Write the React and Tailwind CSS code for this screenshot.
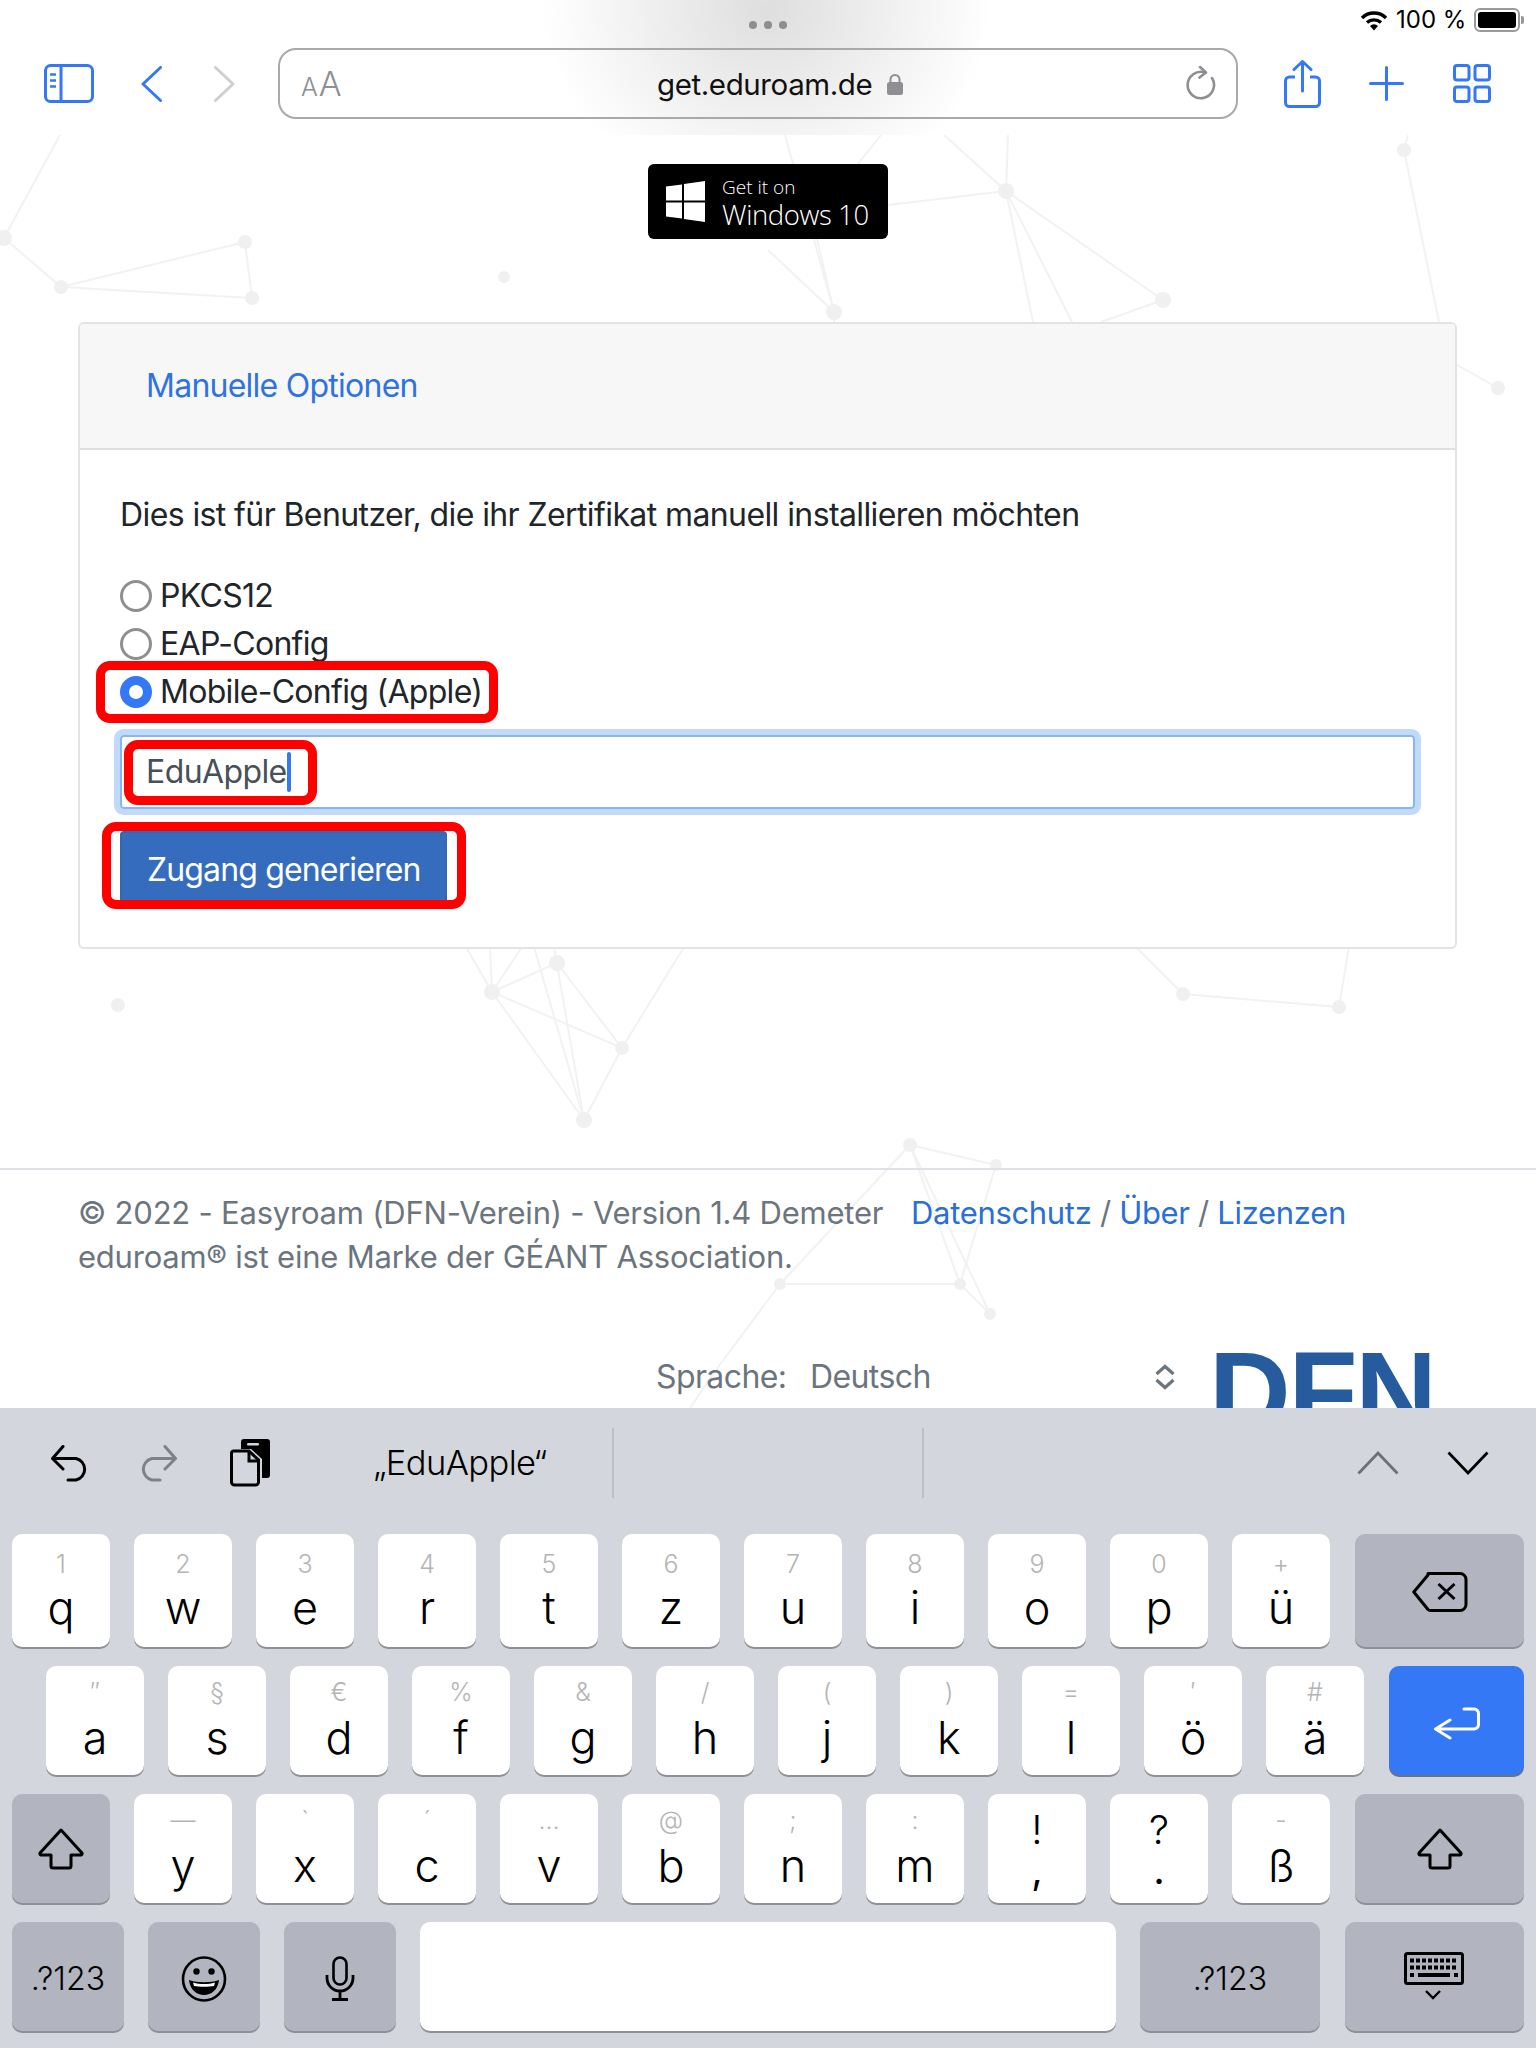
import React from "react";

const F = { fontFamily: '"Inter","Noto Sans",sans-serif' };
const nodes = [[4,238,9],[61,287,8],[245,242,8],[252,298,8],[504,277,7],[834,312,9],[1006,191,9],[1163,300,9],[1404,150,8],[1498,388,8],[118,1005,8],[492,992,9],[557,963,9],[622,1048,8],[584,1120,9],[1183,994,8],[1339,1007,8],[910,1145,8],[996,1165,7],[960,1284,7],[990,1314,7],[780,1284,7]];
const lines = [[60,135,4,238],[4,238,61,287],[61,287,245,242],[245,242,252,298],[61,287,252,298],[785,135,834,312],[817,239,834,312],[768,250,834,312],[834,312,834,322],[881,135,858,164],[888,205,1006,191],[1006,191,1163,300],[1006,191,1033,322],[1006,191,1072,322],[1006,191,1008,135],[944,135,1006,191],[1163,300,1101,322],[1404,150,1439,322],[1408,135,1404,150],[1498,388,1457,365],[466,947,492,992],[490,947,492,992],[522,947,492,992],[492,992,557,963],[492,992,622,1048],[492,992,584,1120],[557,963,622,1048],[622,1048,584,1120],[534,947,584,1120],[554,947,584,1120],[684,947,622,1048],[1183,994,1339,1007],[1183,994,1136,947],[1339,1007,1349,947],[910,1145,960,1284],[910,1145,990,1314],[960,1284,990,1314],[780,1284,960,1284],[780,1284,716,1370],[716,1370,690,1408],[910,1145,996,1165],[780,1284,910,1145],[960,1284,996,1165]];

function Network() {
  return (
    <svg className="absolute left-0 top-[-135px]" width="1536" height="2048" viewBox="0 0 1536 2048">
      {lines.map((l, i) => <line key={i} x1={l[0]} y1={l[1]} x2={l[2]} y2={l[3]} stroke="#f2f2f2" strokeWidth="2" />)}
      {nodes.map((n, i) => <circle key={i} cx={n[0]} cy={n[1]} r={n[2] - 1} fill="#f0f0f0" />)}
    </svg>
  );
}

const blue = "#3478f6";

function StatusRight() {
  return (
    <div className="flex justify-end pr-[12px] pt-[8px] h-[48px] items-center pb-[16px]">
      <svg width="28" height="21" viewBox="0 0 28 21" className="mt-[1px]">
        <path d="M2 8 A17 17 0 0 1 26 8" fill="none" stroke="#000" strokeWidth="3.4" />
        <path d="M7 12.5 A10.5 10.5 0 0 1 21 12.5" fill="none" stroke="#000" strokeWidth="3.4" />
        <path d="M10 16 L14 20.5 L18 16 A5.5 5.5 0 0 0 10 16 Z" fill="#000" />
      </svg>
      <span className="ml-[8px] text-[24px] leading-[24px] text-black w-[78px]">100 %</span>
      <div className="w-[46px] h-[24px] rounded-[6px] border-2 border-[#9a9a9a] p-[2px]">
        <div className="w-full h-full rounded-[3px] bg-black" />
      </div>
      <div className="w-[3px] h-[8px] rounded-r-[2px] bg-[#9a9a9a] ml-[1px]" />
    </div>
  );
}

function Toolbar() {
  return (
    <div className="h-[135px] shrink-0 bg-[radial-gradient(ellipse_225px_190px_at_768px_10px,#dedede,#f2f2f2_60%,#ffffff)]" >
      <div className="grid grid-cols-[1fr_auto_1fr] h-[48px]">
        <div />
        <div className="flex gap-[7px] pt-[21px]">
          <div className="w-[8px] h-[8px] rounded-full bg-[#8e8e8e]" />
          <div className="w-[8px] h-[8px] rounded-full bg-[#8e8e8e]" />
          <div className="w-[8px] h-[8px] rounded-full bg-[#8e8e8e]" />
        </div>
        <StatusRight />
      </div>
      <div className="flex items-center pl-[44px] h-[71px]">
        <svg width="50" height="39" viewBox="0 0 50 39">
          <rect x="1.5" y="1.5" width="47" height="36" rx="5" fill="none" stroke={blue} strokeWidth="3" />
          <path d="M17 1.5V37.5" stroke={blue} strokeWidth="3" />
          <path d="M6 10.5H12M6 16.5H12M6 22.5H12" stroke={blue} strokeWidth="2.4" />
        </svg>
        <svg width="21" height="36" viewBox="0 0 21 36" className="ml-[47px]">
          <path d="M19.5 1.5L2 18L19.5 34.5" fill="none" stroke={blue} strokeWidth="3" strokeLinecap="round" strokeLinejoin="round" />
        </svg>
        <svg width="21" height="36" viewBox="0 0 21 36" className="ml-[52px]">
          <path d="M1.5 1.5L19 18L1.5 34.5" fill="none" stroke="#cfcfcf" strokeWidth="3" strokeLinecap="round" strokeLinejoin="round" />
        </svg>
        <div className="ml-[43px] w-[960px] h-[71px] rounded-[18px] border-2 border-[#a9a9a9] flex items-center pl-[21px]">
          <span className="text-[#8e8e93] w-[38px] flex items-baseline mt-[4px]">
            <span className="text-[25px] leading-[26px] font-light">A</span>
            <span className="ml-[1px] text-[34px] leading-[26px] font-light">A</span>
          </span>
          <span className="ml-[318px] text-[29.5px] leading-[36px] text-[#111] tracking-[-0.4px] whitespace-nowrap">get.eduroam.de</span>
          <svg width="16" height="22" viewBox="0 0 16 22" className="ml-[15px]">
            <path d="M3.5 10V6.5a4.5 4.5 0 0 1 9 0V10" fill="none" stroke="#8e8e93" strokeWidth="2" />
            <rect x="0" y="9" width="16" height="13" rx="2.5" fill="#8e8e93" />
          </svg>
          <svg width="30" height="36" viewBox="0 0 30 36" className="ml-auto mr-[20px]">
            <path d="M19 6.5A13.2 13.2 0 1 0 26 12" fill="none" stroke="#8e8e93" strokeWidth="2.6" strokeLinecap="round" />
            <path d="M14 1L20 6.5L13.5 11.5" fill="none" stroke="#8e8e93" strokeWidth="2.6" strokeLinecap="round" strokeLinejoin="round" />
          </svg>
        </div>
        <svg width="37" height="48" viewBox="0 0 37 48" className="ml-[46px]">
          <path d="M11 17H5.5a4 4 0 0 0-4 4V42.5a4 4 0 0 0 4 4h26a4 4 0 0 0 4-4V21a4 4 0 0 0-4-4H26" fill="none" stroke={blue} strokeWidth="3" />
          <path d="M18.5 31V2M10 9.5L18.5 1.5L27 9.5" fill="none" stroke={blue} strokeWidth="3" strokeLinecap="round" strokeLinejoin="round" />
        </svg>
        <svg width="35" height="35" viewBox="0 0 35 35" className="ml-[48px]">
          <path d="M17.5 1.5V33.5M1.5 17.5H33.5" stroke={blue} strokeWidth="3" strokeLinecap="round" />
        </svg>
        <svg width="38" height="39" viewBox="0 0 38 39" className="ml-[49px]">
          <rect x="1.5" y="1.5" width="14.5" height="14.5" rx="2.5" fill="none" stroke={blue} strokeWidth="3" />
          <rect x="22" y="1.5" width="14.5" height="14.5" rx="2.5" fill="none" stroke={blue} strokeWidth="3" />
          <rect x="1.5" y="23" width="14.5" height="14.5" rx="2.5" fill="none" stroke={blue} strokeWidth="3" />
          <rect x="22" y="23" width="14.5" height="14.5" rx="2.5" fill="none" stroke={blue} strokeWidth="3" />
        </svg>
      </div>
    </div>
  );
}

function Radio({ checked, label }) {
  return (
    <div className="flex items-center h-[48px]">
      {checked ? (
        <div className="w-[32px] h-[32px] rounded-full border-[9px] border-[#3478f6] bg-white" />
      ) : (
        <div className="w-[32px] h-[32px] rounded-full border-[3px] border-[#8f8f8f] bg-white" />
      )}
      <span className="ml-[8px] text-[32px] leading-[48px] text-[#212529] tracking-[-0.7px]">{label}</span>
    </div>
  );
}

function Card() {
  return (
    <div className="relative mt-[83px] mx-[78px] w-[1379px] rounded-[6px] border-2 border-[#e3e3e3] bg-white">
      <div className="h-[126px] bg-[#f7f7f7] border-b-2 border-[#e0e0e0] rounded-t-[4px] flex items-center pl-[66px]">
        <span className="text-[32px] text-[#2f72e0] tracking-[-0.75px]">Manuelle Optionen</span>
      </div>
      <div className="px-[40px] pt-[41px] pb-[38px]">
        <p className="text-[32px] leading-[48px] text-[#212529] tracking-[-0.6px] whitespace-nowrap">Dies ist für Benutzer, die ihr Zertifikat manuell installieren möchten</p>
        <div className="mt-[33px]">
          <Radio label="PKCS12" />
          <Radio label="EAP-Config" />
          <Radio checked label="Mobile-Config (Apple)" />
        </div>
        <div className="mt-[19px] h-[74px] rounded-[4px] border-2 border-[#8ab4f8] shadow-[0_0_0_6px_#c2daf9] flex items-center pl-[24px] relative">
          <span className="text-[32px] text-[#495057] tracking-[-0.6px]">EduApple</span>
          <span className="w-[4px] h-[40px] rounded-[2px] bg-[#3478f6]" />
        </div>
        <div className="mt-[22px] w-[327px] h-[78px] rounded-[4px] bg-[#366cbd] border-2 border-[#3566b0] flex items-center pl-[25px]">
          <span className="text-[32px] text-white tracking-[-0.85px] whitespace-nowrap">Zugang generieren</span>
        </div>
      </div>
      <div className="absolute left-[16px] top-[337px] w-[402px] h-[62px] rounded-[14px] border-[9px] border-[#ff0000]" />
      <div className="absolute left-[44px] top-[416px] w-[193px] h-[65px] rounded-[14px] border-[9px] border-[#ff0000]" />
      <div className="absolute left-[22px] top-[498px] w-[364px] h-[87px] rounded-[14px] border-[9px] border-[#ff0000]" />
    </div>
  );
}

function Footer() {
  return (
    <div className="mt-[219px] border-t-2 border-[#dee2e6] relative">
      <div className="pl-[78px] pt-[21px] text-[31px] leading-[44px] text-[#6c757d] tracking-[-0.22px]">
        <div className="flex whitespace-nowrap">
          <span className="w-[833px]">© 2022 - Easyroam (DFN-Verein) - Version 1.4 Demeter</span>
          <span className="tracking-[-0.32px]"><span className="text-[#2a6fd6]">Datenschutz</span> / <span className="text-[#2a6fd6]">Über</span> / <span className="text-[#2a6fd6]">Lizenzen</span></span>
        </div>
        <div>eduroam® ist eine Marke der GÉANT Association.</div>
      </div>
      <div className="flex items-start mt-[74px] pl-[656px] h-[120px]">
        <span className="text-[32px] leading-[48px] text-[#6c757d] tracking-[-0.6px] w-[154px]">Sprache:</span>
        <span className="text-[32px] leading-[48px] text-[#6c757d] tracking-[-0.6px] w-[344px]">Deutsch</span>
        <svg width="22" height="26" viewBox="0 0 22 26" className="mt-[11px]">
          <path d="M2.5 10L11 2.5L19.5 10M2.5 16L11 23.5L19.5 16" fill="none" stroke="#6c757d" strokeWidth="3.2" />
        </svg>
        <span className="ml-[33px] -mt-[17px] text-[113px] leading-[113px] font-bold text-[#265c9e] tracking-[-2.2px]" style={{ fontFamily: '"Liberation Sans",sans-serif' }}>DFN</span>
      </div>
    </div>
  );
}

function Key({ sub, ch, big, first }) {
  return (
    <div className={`w-[98px] ${first ? "h-[113px]" : "h-[109px]"} rounded-[10px] bg-white shadow-[0_2px_0_#8f9095] flex flex-col items-center text-black`}>
      {big ? (
        <>
          <span className="mt-[14px] text-[40px] leading-[44px] font-light">{sub}</span>
          <span className="text-[40px] leading-[36px]">{ch}</span>
        </>
      ) : (
        <>
          <span className={`${first ? "mt-[14px]" : "mt-[10px]"} h-[32px] text-[25px] leading-[32px] font-light text-[#b4b4b4]`}>{sub}</span>
          <span className={`${first ? "" : "mt-[2px]"} text-[45px] leading-[56px] font-light`}>{ch}</span>
        </>
      )}
    </div>
  );
}

function Dark({ w, children }) {
  return <div className={`${w} h-[109px] rounded-[10px] bg-[#b2b5bf] shadow-[0_2px_0_#8f9095] flex items-center justify-center text-black`}>{children}</div>;
}

const Shift = () => (
  <svg width="46" height="42" viewBox="0 0 46 42">
    <path d="M23 2L44 25a1.5 1.5 0 0 1-1 2H33V38a2 2 0 0 1-2 2H15a2 2 0 0 1-2-2V27H3a1.5 1.5 0 0 1-1-2Z" fill="none" stroke="#000" strokeWidth="3" strokeLinejoin="round" />
  </svg>
);

function Keyboard() {
  const r1 = [["1","q"],["2","w"],["3","e"],["4","r"],["5","t"],["6","z"],["7","u"],["8","i"],["9","o"],["0","p"],["+","ü"]];
  const r2 = [["″","a"],["§","s"],["€","d"],["%","f"],["&","g"],["/","h"],["(","j"],[")","k"],["=","l"],["′","ö"],["#","ä"]];
  const r3 = [["—","y"],["`","x"],["´","c"],["…","v"],["@","b"],[";","n"],[":","m"]];
  return (
    <div className="h-[640px] shrink-0 bg-[#d3d6dc]">
      <div className="h-[126px] flex items-start">
        <svg width="40" height="37" viewBox="0 0 40 37" className="ml-[50px] mt-[37px]">
          <path d="M13 1.5L2.5 13.5L13 24M2.5 13.5H26a11 11 0 0 1 0 21.5H18" fill="none" stroke="#000" strokeWidth="3" strokeLinecap="round" strokeLinejoin="round" />
        </svg>
        <svg width="40" height="37" viewBox="0 0 40 37" className="ml-[48px] mt-[37px]">
          <path d="M27 1.5L37.5 13.5L27 24M37.5 13.5H14a11 11 0 0 0 0 21.5H22" fill="none" stroke="#7f8186" strokeWidth="3" strokeLinecap="round" strokeLinejoin="round" />
        </svg>
        <svg width="40" height="48" viewBox="0 0 40 48" className="ml-[52px] mt-[31px]">
          <path d="M11 3a3 3 0 0 1 3-3H37a3 3 0 0 1 3 3V36a3 3 0 0 1-3 3H32V20L21 10H11Z" fill="#000" />
          <rect x="17" y="4" width="12" height="2.6" rx="1.3" fill="#d3d6dc" />
          <path d="M3.5 12H19L28.5 21V43a3 3 0 0 1-3 3H4.5a3 3 0 0 1-3-3V14a2 2 0 0 1 2-2Z" fill="#d3d6dc" stroke="#000" strokeWidth="3" />
          <path d="M19 12V22H28.5" fill="none" stroke="#000" strokeWidth="3" />
        </svg>
        <span className="ml-[103px] mt-[34px] w-[239px] text-[34.5px] leading-[42px] font-light text-black tracking-[-0.6px]">„EduApple“</span>
        <div className="w-[2px] h-[70px] mt-[20px] bg-[#bcbfc5]" />
        <div className="w-[2px] h-[70px] mt-[20px] ml-[308px] bg-[#bcbfc5]" />
        <svg width="42" height="24" viewBox="0 0 42 24" className="ml-[433px] mt-[43px]">
          <path d="M1.5 22.5L21 2L40.5 22.5" fill="none" stroke="#6e7075" strokeWidth="2.8" />
        </svg>
        <svg width="42" height="24" viewBox="0 0 42 24" className="ml-[48px] mt-[43px]">
          <path d="M1.5 1.5L21 22L40.5 1.5" fill="none" stroke="#000" strokeWidth="2.8" />
        </svg>
      </div>
      <div className="flex gap-[24px] pl-[12px]">
        {r1.map((k) => <Key key={k[1]} sub={k[0]} ch={k[1]} first />)}
        <div className="ml-[1px] w-[169px] h-[113px] rounded-[10px] bg-[#b2b5bf] shadow-[0_2px_0_#8f9095] flex items-center justify-center pt-[3px]">
          <svg width="56" height="40" viewBox="0 0 56 40">
            <path d="M16 1.5H48a6 6 0 0 1 6 6V32.5a6 6 0 0 1-6 6H19a4 4 0 0 1-3-1L1.8 20L16 3Z" fill="none" stroke="#000" strokeWidth="3" strokeLinejoin="round" />
            <path d="M26.5 12L42.5 27M42.5 12L26.5 27" stroke="#000" strokeWidth="3" />
          </svg>
        </div>
      </div>
      <div className="flex gap-[24px] pl-[46px] mt-[19px]">
        {r2.map((k) => <Key key={k[1]} sub={k[0]} ch={k[1]} />)}
        <div className="ml-[1px] w-[135px] h-[109px] rounded-[10px] bg-[#3478f6] shadow-[0_2px_0_#6b7280] flex items-center justify-center pt-[4px]">
          <svg width="48" height="34" viewBox="0 0 48 34">
            <path d="M31 3H41a4.5 4.5 0 0 1 4.5 4.5V18.5A4.5 4.5 0 0 1 41 23H3M17 14L2.5 23L17 32" fill="none" stroke="#fff" strokeWidth="3" strokeLinecap="round" strokeLinejoin="round" />
          </svg>
        </div>
      </div>
      <div className="flex gap-[24px] pl-[12px] mt-[19px]">
        <Dark w="w-[98px]"><Shift /></Dark>
        {r3.map((k) => <Key key={k[1]} sub={k[0]} ch={k[1]} />)}
        <Key big sub="!" ch="," />
        <Key big sub="?" ch="." />
        <Key sub="-" ch="ß" />
        <div className="ml-[1px]"><Dark w="w-[169px]"><Shift /></Dark></div>
      </div>
      <div className="flex gap-[24px] pl-[12px] mt-[19px]">
        <Dark w="w-[112px]"><span className="pt-[5px] text-[32px] font-light tracking-[0.1px]">.?123</span></Dark>
        <Dark w="w-[112px]">
          <svg width="46" height="46" viewBox="0 0 46 46" className="mt-[4px]">
            <ellipse cx="23" cy="23" rx="21" ry="21.5" fill="none" stroke="#000" strokeWidth="2.6" />
            <circle cx="15.5" cy="15.5" r="3.2" fill="#000" />
            <circle cx="30.5" cy="15.5" r="3.2" fill="#000" />
            <path d="M8 24C16 27 30 27 38 24C37 34 30 39 23 39C16 39 9 34 8 24Z" fill="#000" />
            <path d="M12 26.5C19 28.5 27 28.5 34 26.5L33 30C27 31 19 31 13 30Z" fill="#fff" />
          </svg>
        </Dark>
        <Dark w="w-[112px]">
          <svg width="30" height="46" viewBox="0 0 30 46" className="mt-[4px]">
            <rect x="8.5" y="1.5" width="13" height="27" rx="6.5" fill="none" stroke="#000" strokeWidth="2.6" />
            <path d="M2 19V22a13 13 0 0 0 26 0V19M15 35V43M7 43.5H23" fill="none" stroke="#000" strokeWidth="2.8" />
          </svg>
        </Dark>
        <div className="w-[696px] h-[109px] rounded-[10px] bg-white shadow-[0_2px_0_#8f9095]" />
        <Dark w="w-[180px]"><span className="pt-[5px] text-[32px] font-light tracking-[0.1px]">.?123</span></Dark>
        <div className="ml-[1px] w-[179px] h-[109px] rounded-[10px] bg-[#b2b5bf] shadow-[0_2px_0_#8f9095] flex flex-col items-center justify-center pr-[2px]">
          <svg width="60" height="50" viewBox="0 0 60 50">
            <rect x="1.5" y="1.5" width="57" height="30" rx="2" fill="none" stroke="#000" strokeWidth="3" />
            <path d="M6 8.5H54M6 15.5H54" stroke="#000" strokeWidth="4" strokeDasharray="4 2" />
            <path d="M6 23H10M14 23H46M50 23H54" stroke="#000" strokeWidth="4" />
            <path d="M22 39L29 46L36 39" fill="none" stroke="#000" strokeWidth="2.4" />
          </svg>
        </div>
      </div>
    </div>
  );
}

export default function App() {
  return (
    <div className="w-[1536px] h-[2048px] flex flex-col bg-white overflow-hidden" style={F}>
      <Toolbar />
      <div className="relative flex-1 overflow-hidden">
        <Network />
        <div className="relative">
          <div className="mt-[29px] ml-[648px] w-[240px] h-[75px] rounded-[6px] bg-black flex items-center pl-[18px] text-white">
            <svg width="39" height="41" viewBox="0 0 39 41">
              <path d="M0 5.5L16 3.5V19.5H0ZM18 3L39 0V19.5H18ZM0 21.5H16V37.5L0 35.5ZM18 21.5H39V41L18 38Z" fill="#fff" />
            </svg>
            <div className="ml-[17px] flex flex-col pt-[2px]" style={{ fontFamily: '"Open Sans",sans-serif' }}>
              <span className="text-[19px] leading-[23px] font-light">Get it on</span>
              <span className="text-[27.5px] leading-[31px] font-light tracking-[-0.4px] whitespace-nowrap">Windows 10</span>
            </div>
          </div>
          <Card />
          <Footer />
        </div>
      </div>
      <Keyboard />
    </div>
  );
}
